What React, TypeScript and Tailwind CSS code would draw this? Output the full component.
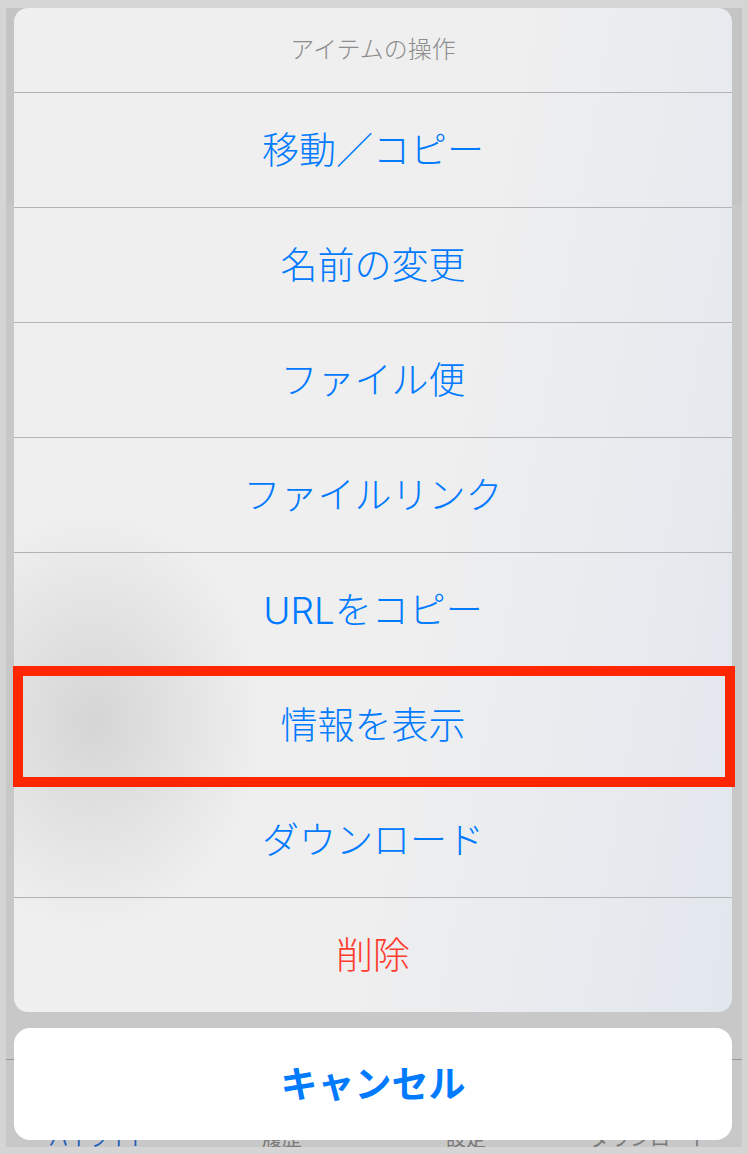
import React from "react";

// ─── Data ───────────────────────────────────────────────────

interface ActionItem {
  label: string;
  destructive?: boolean;
}

const actions: ActionItem[] = [
  { label: "移動／コピー" },
  { label: "名前の変更" },
  { label: "ファイル便" },
  { label: "ファイルリンク" },
  { label: "URLをコピー" },
  { label: "情報を表示" },
  { label: "ダウンロード" },
  { label: "削除", destructive: true },
];

const tabs = [
  { label: "ハイライト", active: true },
  { label: "履歴" },
  { label: "設定" },
  { label: "ダウンロード" },
];

const font = "font-['Inter','Noto_Sans_CJK_JP',sans-serif]";

// ─── Background (content under the dim layer) ───────────────

function UnderlyingScreen() {
  return (
    <div className="absolute inset-0 flex flex-col">
      <div className="h-[197px] bg-[#c4c4c4]" />
      <div className="flex-1" />
      <div className="h-[88px] border-t border-[#9a9a9a] pt-[69px]">
        <div className="grid grid-cols-4 text-center text-[20px] leading-none">
          {tabs.map((t) => (
            <span
              key={t.label}
              className={t.active ? "text-[#1f5fb8]" : "text-[#7a7a7a]"}
            >
              {t.label}
            </span>
          ))}
        </div>
      </div>
    </div>
  );
}

// ─── Action sheet ───────────────────────────────────────────

function ActionRow({ item }: { item: ActionItem }) {
  return (
    <div className="border-t border-[#b3b3b6]">
      <div
        className={`flex h-[114px] items-center justify-center text-[37px] font-light leading-none ${
          item.destructive ? "text-[#ff3b30]" : "text-[#007aff]"
        }`}
      >
        {item.label}
      </div>
    </div>
  );
}

export default function App() {
  return (
    <div
      className={`relative h-[1154px] w-[748px] overflow-hidden bg-[#d5d5d5] pb-[7px] pl-[6px] pr-[6px] pt-[8px] ${font}`}
    >
      <div className="relative h-[1139px] overflow-hidden bg-[#c8c8c8]">
        <UnderlyingScreen />

        <div className="relative ml-[8px] mr-[10px] flex flex-col">
          {/* Action list */}
          <div className="overflow-hidden rounded-[14px] bg-[#efefef] bg-[radial-gradient(ellipse_170px_210px_at_11%_71%,rgba(0,0,0,0.11),transparent),linear-gradient(100deg,transparent_55%,rgba(196,212,236,0.3))]">
            <div className="flex h-[84px] items-center justify-center text-[24px] font-light leading-none text-[#8c8c8c]">
              アイテムの操作
            </div>
            {actions.map((a) => (
              <ActionRow key={a.label} item={a} />
            ))}
          </div>

          {/* Cancel */}
          <div className="mt-[16px] flex h-[112px] items-center justify-center rounded-[16px] bg-white text-[37px] font-bold leading-none text-[#007aff]">
            キャンセル
          </div>
        </div>
      </div>

      {/* Highlight annotation */}
      <div className="absolute left-[13px] top-[666px] h-[121px] w-[722px] border-[10px] border-[#ff2600]" />
    </div>
  );
}
